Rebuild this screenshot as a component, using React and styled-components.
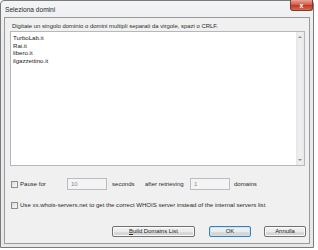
import { createGlobalStyle, styled } from "styled-components";

const GlobalStyle = createGlobalStyle`
  html, body {
    margin: 0;
    padding: 0;
    background: #ffffff;
  }
  body {
    font-family: "Liberation Sans", Arial, sans-serif;
    color: #2a2a2a;
  }
`;

const Window = styled.div`
  width: 314px;
  height: 248px;
  box-sizing: border-box;
  border: 1px solid #7a7a7a;
  border-radius: 4px 4px 0 0;
  background: linear-gradient(#f3f4f6, #e8eaee 40px, #e6e8ec);
  display: flex;
  flex-direction: column;
`;

const TitleBar = styled.div`
  height: 16px;
  display: flex;
  align-items: flex-start;
  justify-content: space-between;
`;

const Title = styled.span`
  font-size: 6.6px;
  margin: 5px 0 0 4px;
  color: #2a2a2a;
`;

const CloseButton = styled.div`
  width: 23px;
  height: 11px;
  margin: -1px 0 0 0;
  box-sizing: border-box;
  border: 1px solid #7d3a30;
  border-top: none;
  border-radius: 0 0 3px 3px;
  background: linear-gradient(#e8a597, #d0614f 45%, #c23b27 55%, #d86b4e);
  color: #fff;
  font-size: 7px;
  font-weight: bold;
  display: flex;
  align-items: center;
  justify-content: center;
`;

const Client = styled.div`
  margin: 0 3px 3px 3px;
  flex: 1;
  box-sizing: border-box;
  border: 1px solid #9a9a9a;
  background: #f0f0f0;
  padding: 4px 4px 0 5px;
  display: flex;
  flex-direction: column;
`;

const Label = styled.div`
  font-size: 5.95px;
  height: 9px;
  line-height: 9px;
  margin-left: 2px;
  white-space: nowrap;
`;

const EditBox = styled.div`
  height: 135px;
  box-sizing: border-box;
  border: 1px solid #b4b7bd;
  background: #fff;
  display: flex;
`;

const Lines = styled.div`
  flex: 1;
  padding: 2px 0 0 2px;
  font-size: 6.1px;
  line-height: 7.6px;
  color: #222;
`;

const ScrollBar = styled.div`
  width: 8px;
  background: linear-gradient(90deg, #e6e6e8, #f1f1f3 50%, #e8e8ea);
  display: flex;
  flex-direction: column;
  justify-content: space-between;
  align-items: center;
  padding: 4px 0;
`;

const Arrow = styled.div`
  width: 0;
  height: 0;
  border-left: 2px solid transparent;
  border-right: 2px solid transparent;
  ${(p) =>
    p.$down
      ? "border-top: 2px solid #8a8a8a;"
      : "border-bottom: 2px solid #8a8a8a;"}
`;

const OptionRow = styled.div`
  display: flex;
  align-items: center;
  height: 12px;
  margin-top: ${(p) => p.$gap}px;
  font-size: 6.05px;
`;

const CheckBox = styled.span`
  width: 7px;
  height: 7px;
  box-sizing: border-box;
  margin-left: 1px;
  margin-right: 2px;
  border: 1px solid #8f8f8f;
  background: linear-gradient(135deg, #dcdcdc, #fafafa);
  flex: none;
`;

const Caption = styled.span`
  width: ${(p) => (p.$width ? `${p.$width}px` : "auto")};
  flex: none;
  white-space: nowrap;
`;

const NumberField = styled.span`
  width: 40px;
  height: 12px;
  box-sizing: border-box;
  border: 1px solid #b9bcc2;
  background: #f4f4f4;
  color: #8a8a8a;
  padding-left: 3px;
  line-height: 10px;
  margin-right: ${(p) => p.$after}px;
  flex: none;
`;

const ButtonRow = styled.div`
  display: flex;
  justify-content: flex-end;
  margin-top: 15px;
  margin-right: -1px;
`;

const Button = styled.button`
  width: ${(p) => p.$width}px;
  height: 11px;
  margin-left: ${(p) => p.$gap}px;
  padding: 0;
  box-sizing: border-box;
  border: 1px solid ${(p) => (p.$default ? "#3c7fb1" : "#707070")};
  border-radius: 2px;
  background: linear-gradient(#f2f2f2, #ebebeb 50%, #dddddd 51%, #cfcfcf);
  box-shadow: inset 0 0 0 1px ${(p) => (p.$default ? "#c5e4f7" : "#fbfbfb")};
  font-family: "Liberation Sans", Arial, sans-serif;
  font-size: 5.9px;
  color: #222;
  line-height: 9px;
`;

const domains = ["TurboLab.it", "Rai.it", "libero.it", "ilgazzettino.it"];

const App = () => {
  return (
    <>
      <GlobalStyle />
      <Window>
        <TitleBar>
          <Title>Seleziona domini</Title>
          <CloseButton>x</CloseButton>
        </TitleBar>
        <Client>
          <Label>
            Digitate un singolo dominio o domini multipli separati da virgole,
            spazi o CRLF.
          </Label>
          <EditBox>
            <Lines>
              {domains.map((d) => (
                <div key={d}>{d}</div>
              ))}
            </Lines>
            <ScrollBar>
              <Arrow />
              <Arrow $down />
            </ScrollBar>
          </EditBox>
          <OptionRow $gap={12}>
            <CheckBox />
            <Caption $width={47}>Pause for</Caption>
            <NumberField $after={5}>10</NumberField>
            <Caption $width={33}>seconds</Caption>
            <Caption $width={45}>after retrieving</Caption>
            <NumberField $after={4}>1</NumberField>
            <Caption>domains</Caption>
          </OptionRow>
          <OptionRow $gap={9}>
            <CheckBox />
            <Caption>
              Use xx.whois-servers.net to get the correct WHOIS server instead
              of the internal servers list
            </Caption>
          </OptionRow>
          <ButtonRow>
            <Button $width={83} $gap={0}>
              <u>B</u>uild Domains List
            </Button>
            <Button $width={42} $gap={14} $default>
              OK
            </Button>
            <Button $width={42} $gap={13}>
              Annulla
            </Button>
          </ButtonRow>
        </Client>
      </Window>
    </>
  );
};

export default App;
